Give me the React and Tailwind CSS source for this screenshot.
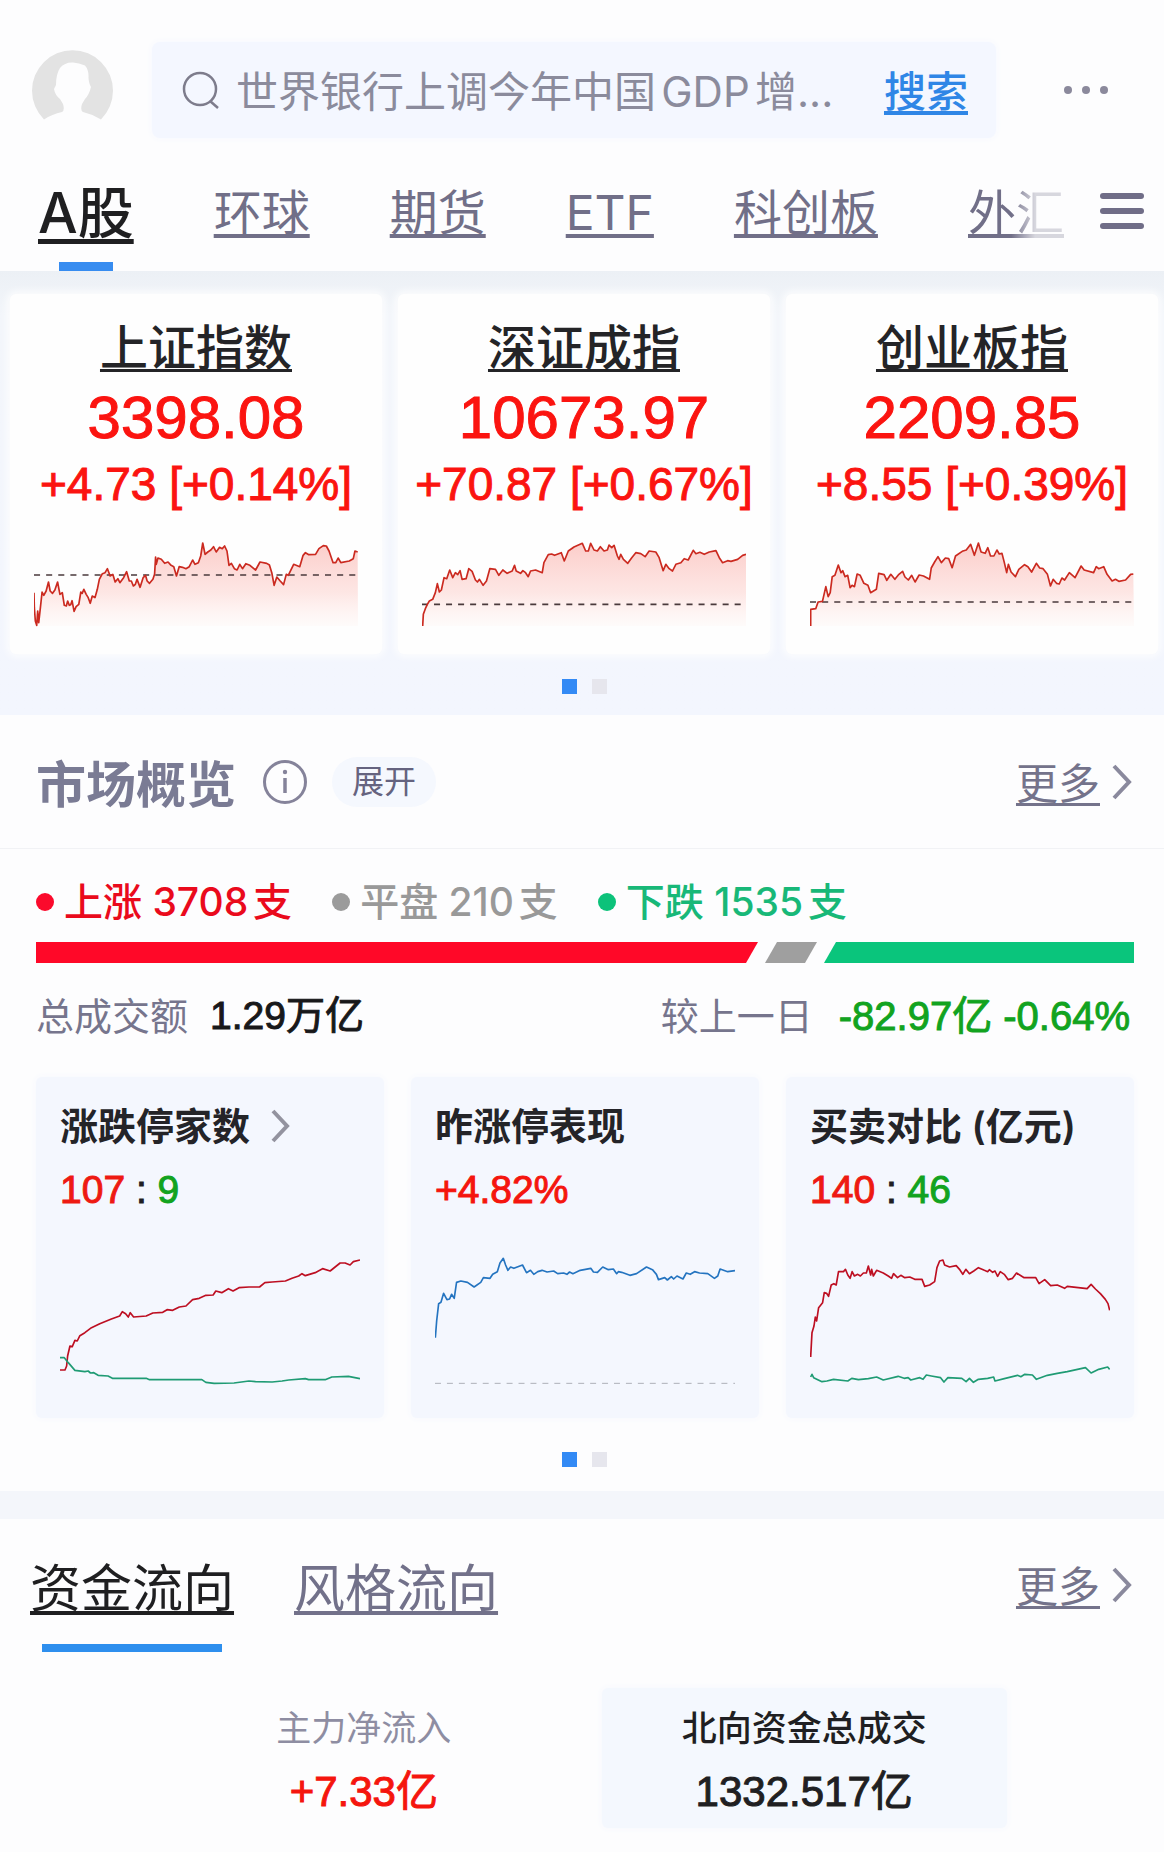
import React from "react";

const INDEXES = [
  {
    name: "上证指数",
    value: "3398.08",
    change: "+4.73 [+0.14%]",
    x0: 109,
    width: 962,
    base: 887,
    points:
      "109,940 110,985 113,1025 117,1038 120,995 123,1030 128,985 133,938 138,948 145,935 152,908 157,935 164,942 171,932 179,908 186,945 193,940 199,978 205,980 209,965 214,978 218,976 222,964 228,996 234,982 242,975 248,938 252,942 257,930 264,945 270,955 276,972 282,950 290,955 297,930 303,900 312,883 320,880 327,868 335,890 343,885 350,908 358,898 364,910 375,895 384,877 392,905 398,905 404,920 410,915 415,900 424,924 433,895 440,888 445,905 452,912 462,900 467,885 470,833 472,855 477,836 487,840 497,852 507,848 516,858 524,862 532,890 540,862 550,864 560,868 570,862 580,842 587,855 597,850 604,830 610,791 617,825 625,818 634,812 642,802 650,818 660,804 668,808 675,800 682,815 688,858 695,852 704,868 712,872 720,855 728,868 738,853 750,858 767,872 780,848 800,852 808,857 815,880 822,918 830,893 840,905 850,916 858,885 864,888 880,855 898,862 908,828 915,820 925,826 945,825 955,808 968,799 977,800 985,815 997,850 1005,850 1012,836 1020,850 1045,845 1057,838 1062,815 1070,818",
  },
  {
    name: "深证成指",
    value: "10673.97",
    change: "+70.87 [+0.67%]",
    x0: 100,
    width: 970,
    base: 975,
    points:
      "102,1040 104,1005 110,988 116,975 122,965 132,960 140,940 146,913 152,938 158,932 166,895 174,898 183,872 192,895 200,880 207,886 214,874 220,900 232,898 240,868 250,876 260,902 266,908 272,900 283,918 293,905 303,868 320,870 330,888 342,872 355,882 370,875 377,858 382,875 395,882 402,874 410,880 418,892 425,875 440,872 460,880 465,850 478,826 488,824 497,828 517,820 526,845 538,815 555,803 580,792 590,815 598,815 605,792 615,812 625,815 634,802 645,815 655,812 660,797 668,805 675,798 685,830 690,840 695,825 703,840 716,852 728,835 740,820 755,823 768,832 780,815 800,818 810,835 822,874 830,855 840,868 850,875 860,855 875,850 885,838 897,842 912,813 920,823 932,819 945,825 960,818 980,814 990,835 1000,850 1015,844 1025,846 1045,840 1060,828 1070,825",
  },
  {
    name: "创业板指",
    value: "2209.85",
    change: "+8.55 [+0.39%]",
    x0: 148,
    width: 962,
    base: 968,
    points:
      "150,1040 150,990 165,988 172,968 185,966 195,922 202,952 208,940 214,892 222,888 232,857 240,880 245,874 252,892 260,888 267,925 273,918 280,922 288,884 297,888 308,912 320,918 328,940 345,930 352,882 368,886 376,903 388,885 400,900 412,885 423,876 430,893 440,902 450,888 460,908 472,887 485,890 503,900 508,866 518,848 528,832 538,850 550,836 560,838 570,865 580,830 600,816 612,812 625,795 636,828 648,791 656,818 668,822 676,805 684,830 694,830 703,812 710,824 718,822 725,850 732,880 737,855 745,878 758,892 768,870 785,856 795,862 806,878 820,852 830,866 840,868 853,885 862,920 870,900 880,912 888,914 896,896 904,902 918,880 935,895 953,860 962,872 990,880 998,862 1005,868 1020,862 1030,885 1045,905 1055,900 1065,906 1085,902 1100,885 1108,884",
  },
];

const LIMIT_UP =
  "120,927 135,927 140,915 143,885 150,855 157,857 165,838 172,840 180,824 195,815 215,800 240,788 275,774 300,765 308,752 318,758 326,768 332,755 342,768 380,765 400,756 430,754 443,746 460,748 480,738 500,735 520,716 540,712 560,703 582,702 590,690 608,695 628,683 642,690 660,680 690,678 722,678 738,665 760,663 800,660 820,652 840,645 850,638 860,644 890,635 912,623 935,630 965,606 980,606 995,612 1005,602 1025,597";
const LIMIT_DOWN =
  "120,890 133,890 145,905 165,928 195,932 205,930 212,936 222,935 235,943 265,945 278,952 380,952 390,956 548,956 560,964 585,967 645,966 690,960 710,962 760,963 790,960 810,957 860,953 870,956 920,956 940,948 990,946 1025,953";
const YESTERDAY =
  "103,830 107,780 113,728 120,724 128,697 138,716 146,714 152,700 160,712 167,664 180,660 200,664 220,678 240,664 248,650 268,652 276,640 290,632 298,606 308,592 315,612 322,628 330,618 340,622 366,612 378,635 390,628 400,640 412,632 425,628 440,633 460,630 472,638 490,636 500,640 508,633 518,638 540,628 572,622 580,633 592,634 608,618 625,626 640,624 650,638 655,632 665,634 690,643 710,638 740,618 758,626 770,640 776,656 795,650 803,657 815,647 822,654 832,645 850,654 860,636 872,640 885,632 900,636 925,638 945,652 955,645 962,624 985,632 1007,629";
const BUY =
  "116,888 120,815 126,795 130,768 134,780 140,740 152,725 157,695 164,697 170,706 178,672 186,668 193,672 200,632 215,632 221,625 228,642 235,652 241,632 248,645 258,640 266,645 275,636 284,636 290,615 297,642 300,625 305,645 315,628 335,636 350,645 360,652 366,638 378,650 388,643 400,650 415,648 430,655 452,655 460,676 475,672 490,662 497,620 505,600 515,597 520,612 535,618 555,614 565,625 575,640 584,625 595,638 608,630 622,620 640,628 650,632 655,626 665,634 672,630 680,646 688,632 700,640 712,656 725,652 737,636 760,650 795,650 805,668 822,656 840,674 860,672 882,682 890,676 950,683 962,670 975,684 990,698 1005,715 1013,728 1018,748";
const SELL =
  "116,948 120,940 125,950 150,962 165,960 185,955 228,960 240,952 260,956 290,953 315,948 335,957 380,946 398,952 410,950 418,957 445,950 455,955 465,942 480,945 508,950 518,963 530,950 572,952 585,962 595,952 607,964 622,955 650,952 668,948 672,960 700,953 740,943 750,947 762,940 785,942 797,955 830,943 860,937 890,932 945,920 962,936 985,925 1012,918 1018,925";

function IndexCard({ item, id }) {
  const end = item.x0 + item.width;
  return (
    <article className="flex flex-col items-center rounded-md bg-[#fefefe] px-6 pt-[22px] pb-[27px] shadow-[0_0_8px_2px_#fefefe]">
      <a
        href="#"
        className="text-5xl leading-[64px] font-medium text-[#242427] underline decoration-[3px] underline-offset-4 [text-decoration-skip-ink:none]"
      >
        {item.name}
      </a>
      <p className="font-[Liberation_Sans,sans-serif] text-6xl leading-[76px] whitespace-nowrap text-[#fb1410] [-webkit-text-stroke:1px_#fb1410]">
        {item.value}
      </p>
      <p className="font-[Liberation_Sans,sans-serif] text-[46px] leading-[56px] whitespace-nowrap text-[#fb1410] [-webkit-text-stroke:1px_#fb1410]">
        {item.change}
      </p>
      <svg
        className="mt-[30px] h-[85px] w-full"
        viewBox={`${item.x0} 788 ${item.width} 255`}
        preserveAspectRatio="none"
        fill="none"
        aria-hidden="true"
      >
        <defs>
          <linearGradient id={id} x1="0" y1="0" x2="0" y2="1">
            <stop offset="0" stopColor="#fbc4c0" stopOpacity="0.85" />
            <stop offset="0.6" stopColor="#fddcd9" stopOpacity="0.7" />
            <stop offset="1" stopColor="#fff6f4" stopOpacity="0.4" />
          </linearGradient>
        </defs>
        <polygon points={`${item.x0},1040 ${item.points} ${end},1040`} fill={`url(#${id})`} />
        <line x1={item.x0} y1={item.base} x2={end} y2={item.base} stroke="#4a3a3c" strokeWidth="5" strokeDasharray="18 18" />
        <polyline points={item.points} stroke="#cb2a20" strokeWidth="5" strokeLinejoin="round" />
      </svg>
    </article>
  );
}

function Pager() {
  return (
    <div className="flex justify-center gap-[15px]">
      <span className="size-[15px] bg-[#338af5]" />
      <span className="size-[15px] bg-[#e6e6ed]" />
    </div>
  );
}

function MoreLink() {
  return (
    <a href="#" className="flex items-center gap-3 text-[42px] leading-[56px] text-[#74738b]">
      <span className="pt-1 underline decoration-[3px] underline-offset-4 [text-decoration-skip-ink:none]">更多</span>
      <svg width="20" height="36" viewBox="0 0 20 36" fill="none" stroke="#8a899d" strokeWidth="4" aria-hidden="true">
        <path d="M2 2 17 18 2 34" />
      </svg>
    </a>
  );
}

function MiniCard({ title, arrow, value, viewBox, children }) {
  return (
    <article className="rounded-md bg-[#f4f7fe] px-6 pt-[23px] pb-[33px] shadow-[0_0_6px_1px_#f7f9fe]">
      <h3 className="flex items-center gap-5 text-[38px] leading-[52px] font-semibold whitespace-nowrap text-[#242428]">
        {title}
        {arrow && (
          <svg width="20" height="34" viewBox="0 0 20 34" fill="none" stroke="#93939f" strokeWidth="4" aria-hidden="true">
            <path d="M3 2 17 17 3 32" />
          </svg>
        )}
      </h3>
      <p className="mt-2.5 font-[Liberation_Sans,sans-serif] text-[39px] leading-[56px]">{value}</p>
      <svg className="mt-[39px] h-[128px] w-full" viewBox={viewBox} preserveAspectRatio="none" fill="none" strokeWidth="5" strokeLinejoin="round" aria-hidden="true">
        {children}
      </svg>
    </article>
  );
}

function Breadth({ color, dot, label }) {
  return (
    <li className={`flex items-center gap-2.5 font-medium whitespace-nowrap ${color}`}>
      <span className={`size-[18px] rounded-full ${dot}`} />
      {label}
    </li>
  );
}

const TABS = ["环球", "期货", "ETF", "科创板"];

export default function App() {
  return (
    <div className="bg-[#fdfdfe] font-[Inter,'Noto_Sans_CJK_SC',sans-serif] [text-autospace:normal]">
      <header className="pt-[42px]">
        <div className="flex items-center pr-14 pl-8">
          <svg className="size-[81px] shrink-0" viewBox="0 0 81 81" role="img" aria-label="头像">
            <path
              d="M12 69.500A40.500 40.500 0 1 1 69 69.500Q60 64 51 62Q48 60 50 54L53 49Q57 45 59 37Q57 34 56.500 28Q57 20 53 15.500Q47 13 41 12.500Q33 12 28 18Q24 24 24 35L22 39Q23 45 28 49L31 54Q33 60 30 62Q20 64 12 69.500Z"
              fill="#e3e3e3"
            />
          </svg>
          <form className="ml-[39px] flex h-24 flex-1 items-center rounded-lg bg-[#f4f7ff] pr-7 pl-[30px] shadow-[0_0_6px_1px_#f7f9ff]">
            <svg width="38" height="38" viewBox="0 0 38 38" fill="none" stroke="#7d7c8c" strokeWidth="2.500" aria-hidden="true">
              <circle cx="18" cy="18" r="16" />
              <path d="m28 30 8 7" />
            </svg>
            <input
              type="text"
              aria-label="搜索内容"
              placeholder="世界银行上调今年中国GDP增..."
              className="ml-4 min-w-0 flex-1 bg-transparent pt-1 text-[42px] leading-[56px] outline-none placeholder:text-[#8b8b9c]"
            />
            <button
              type="button"
              className="pt-1 text-[42px] leading-[56px] font-medium text-[#2f86e6] underline decoration-4 underline-offset-4 [text-decoration-skip-ink:none]"
            >
              搜索
            </button>
          </form>
          <button type="button" aria-label="更多选项" className="ml-[68px] flex gap-[10px]">
            <span className="size-2 rounded-full bg-[#8b899c]" />
            <span className="size-2 rounded-full bg-[#8b899c]" />
            <span className="size-2 rounded-full bg-[#8b899c]" />
          </button>
        </div>
        <div className="mt-[39px] flex items-start gap-9 pr-5 pl-[38px]">
          <nav className="flex flex-1 items-start gap-20 text-5xl leading-[72px] whitespace-nowrap text-[#716f88] [text-autospace:no-autospace]">
            <a href="#" aria-current="page" className="flex flex-col items-center gap-[13px] text-[#1f1f21]">
              <span className="text-[56px] font-medium underline decoration-[5px] underline-offset-[6px] [text-decoration-skip-ink:none]">A股</span>
              <span className="h-[9px] w-[54px] bg-[#378cf0]" />
            </a>
            {TABS.map((tab) => (
              <a key={tab} href="#" className="underline decoration-4 underline-offset-4 [text-decoration-skip-ink:none]">
                {tab}
              </a>
            ))}
            <a
              href="#"
              className="ml-auto underline decoration-4 underline-offset-4 [mask-image:linear-gradient(to_right,#000_45%,#0004_70%)] [text-decoration-skip-ink:none]"
            >
              外汇
            </a>
          </nav>
          <button type="button" aria-label="菜单" className="flex h-[68px] w-11 flex-col justify-center gap-[9px]">
            <span className="h-1.5 w-full rounded-full bg-[#706d87]" />
            <span className="h-1.5 w-full rounded-full bg-[#706d87]" />
            <span className="h-1.5 w-full rounded-full bg-[#706d87]" />
          </button>
        </div>
      </header>

      <section className="bg-linear-to-b from-[#ecf0f5] via-[#f3f6fb] via-10% to-[#f3f6fe] pt-[23px] pr-1.5 pb-[21px] pl-2.5">
        <div className="mb-[25px] grid grid-cols-3 gap-4">
          {INDEXES.map((item, i) => (
            <IndexCard key={item.name} item={item} id={`area-${i}`} />
          ))}
        </div>
        <Pager />
      </section>

      <section>
        <div className="flex items-center border-b border-[#f1f2f5] pt-[37px] pr-8 pb-9 pl-9">
          <h2 className="-mb-1.5 text-[50px] leading-[64px] font-bold text-[#7a7b94]">市场概览</h2>
          <svg className="ml-[26px]" width="46" height="46" viewBox="0 0 46 46" fill="none" stroke="#85839a" strokeWidth="3" role="img" aria-label="说明">
            <circle cx="23" cy="23" r="20.500" />
            <path d="M23 19v15" strokeWidth="3.500" />
            <circle cx="23" cy="13" r="2.200" fill="#85839a" stroke="none" />
          </svg>
          <button type="button" className="ml-6 rounded-full bg-[#f5f8fe] px-5 text-[32px] leading-[50px] text-[#65637f]">
            展开
          </button>
          <div className="ml-auto">
            <MoreLink />
          </div>
        </div>

        <div className="pt-7 pr-[30px] pl-9">
          <ul className="flex items-center gap-10 text-[39px] leading-[50px]">
            <Breadth color="text-[#ea0a1c]" dot="bg-[#fb0a2c]" label="上涨 3708支" />
            <Breadth color="text-[#999999]" dot="bg-[#9b9b9b]" label="平盘 210支" />
            <Breadth color="text-[#18b878]" dot="bg-[#0cc27a]" label="下跌 1535支" />
          </ul>
          <div className="mt-[15px] flex h-[21px] gap-[7px]">
            <span className="flex-[722] bg-[#ff0828] [clip-path:polygon(0_0,100%_0,calc(100%_-_12px)_100%,0_100%)]" />
            <span className="flex-[52] bg-[#9f9f9f] [clip-path:polygon(12px_0,100%_0,calc(100%_-_12px)_100%,0_100%)]" />
            <span className="flex-[310] bg-[#0ac57c] [clip-path:polygon(12px_0,100%_0,100%_100%,0_100%)]" />
          </div>
          <div className="mt-[23px] flex items-center justify-between pr-1 text-[38px] leading-[60px] whitespace-nowrap text-[#76758d]">
            <p className="flex gap-[22px]">
              总成交额
              <span className="font-[Liberation_Sans,'Noto_Sans_CJK_SC',sans-serif] text-[39px] text-[#18181a] [-webkit-text-stroke:1px_#18181a] [text-autospace:no-autospace]">
                1.29万亿
              </span>
            </p>
            <p className="flex gap-[26px]">
              较上一日
              <span className="font-[Liberation_Sans,'Noto_Sans_CJK_SC',sans-serif] text-[40px] text-[#12a31f] [-webkit-text-stroke:1px_#12a31f] [text-autospace:no-autospace]">
                -82.97亿 -0.64%
              </span>
            </p>
          </div>

          <div className="mt-[31px] grid grid-cols-3 gap-[27px]">
            <MiniCard
              title="涨跌停家数"
              arrow
              viewBox="120 588 905 384"
              value={
                <>
                  <span className="text-[#ee1a12] [-webkit-text-stroke:1px_#ee1a12]">107</span>
                  <span className="text-[#1f1f22] [-webkit-text-stroke:1px_#1f1f22]"> : </span>
                  <span className="text-[#12a31f] [-webkit-text-stroke:1px_#12a31f]">9</span>
                </>
              }
            >
              <polyline points={LIMIT_UP} stroke="#bd0f22" />
              <polyline points={LIMIT_DOWN} stroke="#1f9b74" />
            </MiniCard>
            <MiniCard
              title="昨涨停表现"
              viewBox="102 588 905 384"
              value={<span className="text-[#f5150e] [-webkit-text-stroke:1px_#f5150e]">+4.82%</span>}
            >
              <line x1="102" y1="967" x2="1007" y2="967" stroke="#aeb0b8" strokeWidth="3" strokeDasharray="18 18" />
              <polyline points={YESTERDAY} stroke="#2474c0" />
            </MiniCard>
            <MiniCard
              title="买卖对比 (亿元)"
              viewBox="114 588 905 384"
              value={
                <>
                  <span className="text-[#ee1a12] [-webkit-text-stroke:1px_#ee1a12]">140</span>
                  <span className="text-[#1f1f22] [-webkit-text-stroke:1px_#1f1f22]"> : </span>
                  <span className="text-[#12a31f] [-webkit-text-stroke:1px_#12a31f]">46</span>
                </>
              }
            >
              <polyline points={BUY} stroke="#bd0f22" />
              <polyline points={SELL} stroke="#1f9b74" />
            </MiniCard>
          </div>
        </div>
        <div className="pt-[34px] pb-6 pl-1">
          <Pager />
        </div>
      </section>

      <section className="border-t-[28px] border-[#f4f6fb]">
        <div className="flex items-start pt-9 pr-8 pl-[30px]">
          <nav className="flex items-start gap-[60px] text-[51px] leading-[68px] whitespace-nowrap">
            <a href="#" aria-current="page" className="flex flex-col items-center gap-[21px] text-[#1f1f21]">
              <span className="underline decoration-4 underline-offset-4 [text-decoration-skip-ink:none]">资金流向</span>
              <span className="h-2 w-[180px] bg-[#2e8fee]" />
            </a>
            <a href="#" className="text-[#72718a] underline decoration-4 underline-offset-4 [text-decoration-skip-ink:none]">
              风格流向
            </a>
          </nav>
          <div className="ml-auto">
            <MoreLink />
          </div>
        </div>
        <div className="mx-auto mt-9 grid w-[73%] grid-cols-2 gap-[35px] pb-6 pl-1 text-center">
          <div className="rounded-md pt-3.5 pb-2">
            <p className="text-[35px] leading-[52px] text-[#8e8da2]">主力净流入</p>
            <p className="mt-2.5 font-[Liberation_Sans,'Noto_Sans_CJK_SC',sans-serif] text-[42px] leading-[56px] text-[#f5150e] [-webkit-text-stroke:1px_#f5150e] [text-autospace:no-autospace]">
              +7.33亿
            </p>
          </div>
          <div className="rounded-md bg-[#f4f8fe] pt-3.5 pb-2 shadow-[0_0_6px_1px_#f7f9fe]">
            <p className="text-[35px] leading-[52px] font-medium text-[#1f1f22]">北向资金总成交</p>
            <p className="mt-2.5 font-[Liberation_Sans,'Noto_Sans_CJK_SC',sans-serif] text-[42px] leading-[56px] text-[#1f1f22] [-webkit-text-stroke:1px_#1f1f22] [text-autospace:no-autospace]">
              1332.517亿
            </p>
          </div>
        </div>
      </section>
    </div>
  );
}
